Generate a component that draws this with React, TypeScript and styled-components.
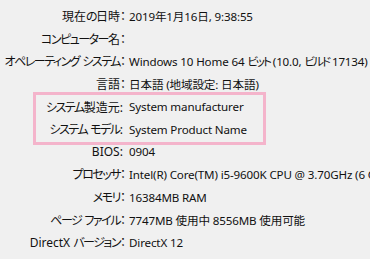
import { FC, ReactNode } from 'react'
import styled, { createGlobalStyle } from 'styled-components'

const GlobalStyle = createGlobalStyle`
  html, body {
    margin: 0;
    padding: 0;
    background: #f0f0f0;
    overflow: hidden;
  }
`

type Item = { label: string; value: string }

const topItems: Item[] = [
  { label: '現在の日時：', value: '2019年1月16日, 9:38:55' },
  { label: 'コンピューター名：', value: '' },
  { label: 'オペレーティング システム：', value: 'Windows 10 Home 64 ビット (10.0, ビルド 17134)' },
  { label: '言語：', value: '日本語 (地域設定: 日本語)' },
]

const markedItems: Item[] = [
  { label: 'システム製造元: ', value: 'System manufacturer' },
  { label: 'システム モデル: ', value: 'System Product Name' },
]

const bottomItems: Item[] = [
  { label: 'BIOS: ', value: '0904' },
  { label: 'プロセッサ：', value: 'Intel(R) Core(TM) i5-9600K CPU @ 3.70GHz (6 CPUs), ~3.7GHz' },
  { label: 'メモリ：', value: '16384MB RAM' },
  { label: 'ページ ファイル：', value: '7747MB 使用中 8556MB 使用可能' },
  { label: 'DirectX バージョン：', value: 'DirectX 12' },
]

// カナは Yu Gothic UI 風に詰める
const withKana = (text: string, squeeze: number): ReactNode[] =>
  text.split(/([\u3041-\u3096\u30a1-\u30fc]+)/).map((part, i) =>
    i % 2 === 1 ? (
      <Kana key={i} $squeeze={squeeze}>
        {part}
      </Kana>
    ) : (
      part
    )
  )

const InfoRow: FC<Item> = ({ label, value }) => (
  <Row>
    <Label>{withKana(label, 1.5)}</Label>
    <Value>{withKana(value, 2)}</Value>
  </Row>
)

const App: FC = () => {
  return (
    <>
      <GlobalStyle />
      <Panel>
        {topItems.map((it) => (
          <InfoRow key={it.label} {...it} />
        ))}
        <Marked>
          {markedItems.map((it) => (
            <InfoRow key={it.label} {...it} />
          ))}
        </Marked>
        {bottomItems.map((it) => (
          <InfoRow key={it.label} {...it} />
        ))}
      </Panel>
    </>
  )
}

const Panel = styled.div`
  width: 370px;
  height: 259px;
  padding-top: 5px;
  box-sizing: border-box;
  overflow: hidden;
  background: #f0f0f0;
  color: #111;
  font-family: 'Noto Sans', 'Noto Sans CJK JP', sans-serif;
  font-size: 12px;
  font-feature-settings: 'palt';
`

const Row = styled.div`
  display: flex;
  align-items: center;
  height: 22.6px;
  white-space: pre;
`

const Label = styled.span`
  flex: 0 0 126px;
  text-align: right;
`

const Value = styled.span`
  margin-left: 3px;
  font-size: 11.6px;
  letter-spacing: -0.15px;
`

const Kana = styled.span<{ $squeeze: number }>`
  letter-spacing: ${(p) => -p.$squeeze}px;
`

// 手書きの枠（スクリーンショット上の注釈）
const Marked = styled.div`
  position: relative;
  &::after {
    content: '';
    position: absolute;
    left: 33px;
    top: -3px;
    width: 233px;
    height: 53px;
    border: 3px solid #f4b4cb;
    box-sizing: border-box;
    pointer-events: none;
  }
`

export default App
